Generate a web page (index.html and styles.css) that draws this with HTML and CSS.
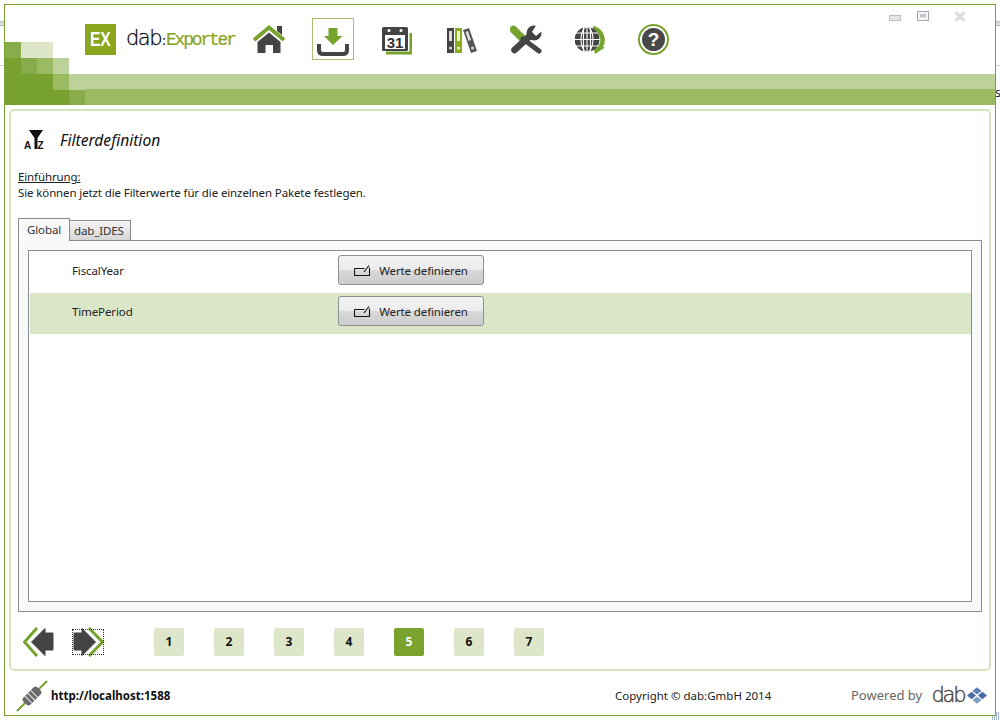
FILE: index.html
```html
<!DOCTYPE html>
<html lang="de">
<head>
<meta charset="utf-8">
<title>dab:Exporter</title>
<link rel="stylesheet" href="styles.css">
</head>
<body>
<div class="backdrop-line l1"></div>
<div class="backdrop-line l2"></div>
<span class="edge">s</span>
<i class="grip"></i>
<div class="window">
  <header class="header">
    <div class="mosaic">
      <i class="m a" ></i><i class="m b"></i><i class="m c"></i><i class="m n"></i><i class="m n"></i>
      <i class="m d"></i><i class="m e"></i><i class="m f"></i><i class="m g"></i><i class="m n"></i>
      <i class="m d"></i><i class="m d"></i><i class="m d"></i><i class="m h"></i><i class="m g"></i>
      <i class="m d"></i><i class="m d"></i><i class="m d"></i><i class="m d"></i><i class="m e"></i>
    </div>
    <div class="winbtns">
      <svg class="wb-min" width="12" height="6" viewBox="0 0 12 6"><rect x=".5" y=".5" width="11" height="5" fill="#e4e4e8" stroke="#bcbcc4"/></svg>
      <svg class="wb-max" width="12" height="10" viewBox="0 0 12 10"><rect x=".5" y=".5" width="11" height="9" fill="#f4f4f6" stroke="#a8a8b2"/><rect x="3" y="3" width="6" height="3.500" fill="#c4c4cc"/></svg>
      <svg class="wb-close" width="12" height="11" viewBox="0 0 12 11"><path d="M1.500 1 L10.500 10 M10.500 1 L1.500 10" stroke="#e0e0e4" stroke-width="3.200"/></svg>
    </div>
    <div class="top">
      <div class="logo">
        <div class="ex"><span>EX</span></div>
        <div class="brand"><span class="dab">dab</span><span class="colon">:</span><span class="exporter">Exporter</span></div>
      </div>
      <nav class="nav">
        <svg class="ic home" width="33" height="30" viewBox="0 0 33 30"><path d="M24 1h5v9l-5-4z" fill="#444"/><path d="M1 15 L16 2.500 L31 15" fill="none" stroke="#76a22e" stroke-width="3.800"/><path d="M4.500 17 L16 7.500 L27.500 17 V28 H20 V20 H12.500 V28 H4.500z" fill="#444"/></svg>
        <div class="ic dl"><svg width="34" height="30" viewBox="0 0 34 30"><path d="M12.500 2h9v8h5L17 19 8 10h4.500z" fill="#76a22e"/><path d="M3 18v6q0 4 4 4h20q4 0 4-4v-6" fill="none" stroke="#454545" stroke-width="4"/></svg></div>
        <svg class="ic cal" width="30" height="28" viewBox="0 0 30 28"><path d="M4 26h25V6" fill="none" stroke="#76a22e" stroke-width="3"/><rect x="0" y="0" width="26" height="24" rx="1.500" fill="#444"/><circle cx="7" cy="3.500" r="1.500" fill="#fff"/><circle cx="19" cy="3.500" r="1.500" fill="#fff"/><rect x="3" y="8" width="20" height="14" fill="#fff"/><text x="13" y="21" class="cal-num" text-anchor="middle">31</text></svg>
        <svg class="ic bind" width="30" height="27" viewBox="0 0 30 27"><rect x="0" y="1" width="7" height="25" fill="#444"/><rect x="2" y="4" width="3" height="10" fill="#ddd"/><circle cx="3.500" cy="21" r="1.500" fill="#ddd"/><rect x="8" y="1" width="7" height="25" fill="#8aad1e"/><rect x="10" y="4" width="3" height="10" fill="#eef3d8"/><circle cx="11.500" cy="21" r="1.500" fill="#eef3d8"/><path d="M16 3l6-2 8 23-6 2z" fill="#555"/><path d="M18.500 5l2.500-1 3 9-2.500 1z" fill="#ddd"/><circle cx="25.500" cy="21" r="1.500" fill="#ddd"/></svg>
        <svg class="ic tools" width="33" height="30" viewBox="0 0 33 30"><path d="M3.500 4.500 L12.500 13.500" stroke="#76a22e" stroke-width="7.500" stroke-linecap="round"/><path d="M13 14 L29 26" stroke="#444" stroke-width="5" stroke-linecap="round"/><path d="M4.500 25 L22 9" stroke="#444" stroke-width="6.500" stroke-linecap="round"/><circle cx="24" cy="8" r="7.500" fill="#444"/><path d="M27 -1 L33 5 L26 11 L22 7z" fill="#fff"/></svg>
        <svg class="ic globe" width="31" height="28" viewBox="0 0 31 28"><path d="M18 2 A 12.500 12.500 0 0 1 25.500 21" fill="none" stroke="#76a22e" stroke-width="4.500"/><path d="M18 19 L30 21.500 L20 28z" fill="#76a22e"/><circle cx="12" cy="13.500" r="12.500" fill="#444"/><g fill="none" stroke="#fff" stroke-width="1.100"><ellipse cx="12" cy="13.500" rx="6" ry="12.500"/><path d="M12 0v27M8.500 1v25M15.500 1v25M0 13.500h25M1 7h22M1 20h22"/></g></svg>
        <div class="ic help"><span class="q">?</span></div>
      </nav>
    </div>
    <div class="band b1"></div>
    <div class="band b2"></div>
  </header>

  <main class="panel">
    <div class="title">
      <svg width="20" height="20" viewBox="0 0 20 20"><path d="M5 0h14l-5.500 8V19H10.500V8z" fill="#111"/><text x="0" y="19" class="az">A</text><text x="13.500" y="19" class="az">Z</text></svg>
      <h1>Filterdefinition</h1>
    </div>
    <div class="intro">
      <div class="u">Einführung:</div>
      <div>Sie können jetzt die Filterwerte für die einzelnen Pakete festlegen.</div>
    </div>
    <div class="tabs">
      <div class="tab active">Global</div>
      <div class="tab other">dab_IDES</div>
    </div>
    <div class="tabbody">
      <div class="list">
        <div class="row"><span class="name">FiscalYear</span><button class="btn"><svg width="17" height="11" viewBox="0 0 17 11"><path d="M.500 3.500h10M.500 3.500v7h15v-8M10 7l5-6.500" fill="none" stroke="#111" stroke-width="1.100"/></svg>Werte definieren</button></div>
        <div class="row alt"><span class="name">TimePeriod</span><button class="btn"><svg width="17" height="11" viewBox="0 0 17 11"><path d="M.500 3.500h10M.500 3.500v7h15v-8M10 7l5-6.500" fill="none" stroke="#111" stroke-width="1.100"/></svg>Werte definieren</button></div>
      </div>
    </div>
    <div class="pager">
      <svg class="arrow" width="32" height="30" viewBox="0 0 32 30"><path d="M14 1 L1.500 15 L14 29" fill="none" stroke="#76a22e" stroke-width="3"/><path d="M22 1.500 L8.500 15 L22 28.500 V23 H30 V6 H22z" fill="#444" stroke="#444" stroke-linejoin="round"/></svg>
      <div class="arrow-next"><svg width="32" height="30" viewBox="0 0 32 30"><path d="M9 1.500 L22.500 15 L9 28.500 V23 H1 V6 H9z" fill="#444" stroke="#444" stroke-linejoin="round"/><path d="M16 1 L29.500 15 L16 29" fill="none" stroke="#76a22e" stroke-width="3"/></svg></div>
      <div class="pages">
        <span class="pg">1</span><span class="pg">2</span><span class="pg">3</span><span class="pg">4</span><span class="pg on">5</span><span class="pg">6</span><span class="pg">7</span>
      </div>
    </div>
  </main>

  <footer class="footer">
    <svg class="plug" width="32" height="32" viewBox="0 0 32 32"><path d="M1 31 L31 1" stroke="#76a22e" stroke-width="2"/><g transform="rotate(-45 16 16)"><rect x="6" y="11" width="20" height="10" rx="3" fill="#6a6a6a"/><path d="M11 11v10M15 11v10M19 11v10" stroke="#ddd" stroke-width="1.200"/></g></svg>
    <span class="url">http://localhost:1588</span>
    <span class="copy">Copyright © dab:GmbH 2014</span>
    <span class="powered">Powered by <span class="pdab">dab</span><svg width="20" height="17" viewBox="0 0 22 18"><path d="M11 0l5 4-5 4-5-4z" fill="#5f7fb5"/><path d="M5 5l5 4-5 4-5-4zM17 5l5 4-5 4-5-4z" fill="#4a6aa5"/><path d="M11 10l5 4-5 4-5-4z" fill="#7f9bc8"/></svg></span>
  </footer>
</div>
</body>
</html>
```
FILE: styles.css
```css
* { box-sizing: border-box; }
html, body { margin: 0; height: 720px; overflow: hidden; background: #fff; }
body { position: relative; padding: 4px; font-family: "Noto Sans", "Open Sans", sans-serif; font-size: 11.5px; letter-spacing: -.12px; color: #1c1c1c; }
.backdrop-line { position: absolute; left: 0; right: 0; height: 1px; background: #d4d4d4; }
.backdrop-line.l1 { top: 21px; height: 5px; background: #ddd; border-top: 1px solid #bbb; border-bottom: 1px solid #bbb; }
.backdrop-line.l2 { top: 65px; }
.edge { position: absolute; left: 995px; top: 84px; font-size: 12px; color: #223; }
.grip { position: absolute; left: 992px; top: 712px; width: 8px; height: 8px; background: repeating-linear-gradient(90deg, #a8b8d8 0 1px, transparent 1px 2px); }
.window { position: relative; width: 992px; height: 712px; background: #fff; border: 1px solid #7aa32d; display: flex; flex-direction: column; }
.header { position: relative; height: 100px; flex: none; display: flex; flex-direction: column; }
.mosaic { position: absolute; left: 0; top: 37px; display: grid; grid-template-columns: repeat(5, 16px); grid-auto-rows: 16px; height: 63px; overflow: hidden; }
.m.a { background: #8aad4c; } .m.b, .m.c { background: #dde6c8; } .m.d { background: #78a22f; }
.m.e { background: #88ac4a; } .m.f { background: #9bbb63; } .m.g { background: #bdd29a; } .m.h { background: #9bbb63; }
.winbtns { position: absolute; top: 6px; left: 884px; display: flex; align-items: flex-start; }
.wb-min { margin-top: 4px; } .wb-max { margin-left: 16px; } .wb-close { margin-left: 25px; }
.top { height: 69px; padding: 13px 0 0 80px; display: flex; align-items: flex-start; }
.logo { display: flex; align-items: center; height: 31px; margin-top: 6px; }
.ex { width: 31px; height: 31px; background: #8aa51e; color: #fff; font: bold 20px/31px "Liberation Sans", sans-serif; letter-spacing: 0; text-align: center; }
.ex span { display: inline-block; transform: scaleX(.78); }
.brand { margin-left: 10px; display: flex; align-items: baseline; width: 110px; line-height: 20px; letter-spacing: 0; }
.dab { font: 200 21px/20px "DejaVu Sans", sans-serif; color: #000; letter-spacing: -1.5px; width: 36px; -webkit-text-stroke: .25px #000; }
.colon { font: bold 12px/20px "Liberation Sans", sans-serif; color: #333; width: 4px; }
.exporter { font: 18px/20px "Liberation Mono", monospace; color: #8aa51e; letter-spacing: -2.2px; -webkit-text-stroke: .2px #8aa51e; }
.nav { display: flex; position: relative; margin-left: 17px; height: 42px; }
.ic { flex: none; }
.home { margin-top: 7px; }
.dl { width: 42px; height: 42px; margin-left: 26px; border: 1px solid #a5c070; display: flex; align-items: flex-end; justify-content: center; padding-bottom: 3px; }
.cal { margin: 9px 0 0 28px; }
.bind { margin: 9px 0 0 35px; }
.tools { margin: 7px 0 0 33px; }
.globe { margin: 8px 0 0 32px; }
.help { width: 31px; height: 31px; margin: 6px 0 0 32px; border-radius: 50%; background: #fff; border: 2px solid #76a22e; display: flex; align-items: center; justify-content: center; }
.q { width: 23px; height: 23px; border-radius: 50%; background: #484848; color: #fff; font: bold 19px/23px "Liberation Sans", sans-serif; text-align: center; }
.cal-num { font: bold 15px "Liberation Sans", sans-serif; fill: #333; }
.band { flex: none; }
.b1 { height: 15px; background: #bdd29a; }
.b2 { height: 16px; background: #9bbb63; }
.panel { flex: none; margin: 4px 4px 0 4px; height: 562px; border: 2px solid #d5e2bb; border-radius: 5px; padding: 0 7px; display: flex; flex-direction: column; }
.title { display: flex; align-items: center; height: 22px; margin-top: 18px; padding-left: 6px; }
.title h1 { margin: 0 0 0 16px; font-size: 15.6px; letter-spacing: 0; font-weight: 400; font-style: italic; color: #111; line-height: 22px; }
.az { font: bold 10px "Liberation Sans", sans-serif; fill: #111; }
.intro { margin-top: 18px; line-height: 16px; color: #222; }
.u { text-decoration: underline; }
.tabs { display: flex; align-items: flex-end; margin-top: 16px; height: 23px; position: relative; z-index: 1; }
.tab { height: 20px; border: 1px solid #8a8a94; border-bottom: 0; line-height: 19px; color: #333; }
.tab.other { width: 61px; padding-left: 4px; border-left: 0; background: linear-gradient(#f4f4f4, #d6d6d6); }
.tab.active { width: 52px; height: 23px; padding-left: 8px; margin-bottom: -1px; line-height: 22px; background: #f9f9f9; }
.tabbody { height: 372px; border: 1px solid #8a8a94; background: #f9f9f9; padding: 9px; }
.list { height: 352px; border: 1px solid #8a8a94; background: #fff; padding-left: 1px; }
.row { display: flex; align-items: flex-start; height: 42px; padding: 4px 0 0 42px; }
.row.alt { height: 41px; padding-top: 3px; background: #dbe6c8; }
.name { width: 266px; color: #222; line-height: 30px; padding-top: 1px; }
.btn { width: 146px; height: 30px; border: 1px solid #8e8e8e; border-radius: 3px; background: linear-gradient(#f3f3f3 0, #ececec 48%, #d8d8d8 52%, #cdcdcd 100%); display: flex; align-items: center; justify-content: center; gap: 8px; padding: 0; font: inherit; letter-spacing: inherit; color: #222; }
.pager { position: relative; display: flex; align-items: center; margin-top: 14px; height: 32px; padding-left: 5px; }
.arrow-next { position: relative; margin-left: 18px; height: 30px; }
.arrow-next::after { content: ""; position: absolute; left: -1px; right: 1px; top: 2px; bottom: 2px; border: 1px dotted #333; }
.pages { position: absolute; left: 136px; top: 2px; display: flex; gap: 30px; }
.pg { width: 30px; height: 28px; background: #dde6c9; border-radius: 2px; font: bold 12px/28px "Noto Sans", sans-serif; letter-spacing: 0; text-align: center; color: #111; }
.pg.on { background: #7aa32d; color: #fff; }
.footer { position: relative; flex: 1; display: flex; align-items: center; padding: 4px 0 0 11px; letter-spacing: 0; }
.plug { flex: none; margin-top: 1px; }
.url { font-weight: 700; color: #111; margin-left: 3px; width: 564px; }
.copy { color: #222; width: 236px; }
.powered { display: flex; align-items: center; font-size: 13px; color: #666; white-space: pre; }
.pdab { font: 200 21px/20px "DejaVu Sans", sans-serif; color: #444; letter-spacing: -2.3px; margin: 0 3px 0 6px; -webkit-text-stroke: .4px #444; }
```
